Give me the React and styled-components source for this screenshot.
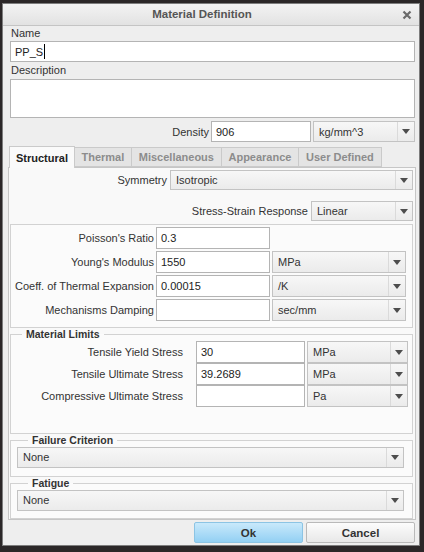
import React from "react";
import styled, { createGlobalStyle } from "styled-components";

const Global = createGlobalStyle`
  html, body { margin: 0; padding: 0; background: #2b2728; }
  body {
    width: 424px; height: 552px; overflow: hidden;
    font-family: "Liberation Sans", Arial, sans-serif; font-size: 11px; color: #333;
  }
  * { box-sizing: border-box; }
`;

const Window = styled.div`
  margin: 3px 0 0 2px;
  width: 418px;
  height: 543px;
  background: #eeeeee;
  border: 1px solid #7d7d7d;
  display: flex;
  flex-direction: column;
`;

const TitleBar = styled.div`
  height: 22px;
  flex: none;
  display: flex;
  align-items: center;
  justify-content: center;
  background: linear-gradient(#f3f3f3, #e2e2e2);
  border-bottom: 1px solid #c4c4c4;
  padding: 0 18px 1px 0;
  position: relative;
`;

const Title = styled.div`
  font-weight: bold;
  font-size: 11.5px;
  color: #555;
`;

const CloseBtn = styled.div`
  position: absolute;
  right: 7px;
  top: 6px;
  width: 10px;
  height: 10px;
  display: flex;
`;

const Body = styled.div`
  flex: 1;
  display: flex;
  flex-direction: column;
  padding: 0 4px 0 7px;
`;

const Label = styled.div`
  height: ${(p) => p.$h || 14}px;
  line-height: ${(p) => p.$h || 14}px;
  padding-left: 1px;
  color: #333;
  font-size: 11px;
`;

const TextBox = styled.div`
  height: ${(p) => p.$h || 21}px;
  width: ${(p) => (p.$w ? p.$w + "px" : "auto")};
  flex: none;
  background: #fff;
  border: 1px solid #b4b4b4;
  display: flex;
  align-items: center;
  padding: 0 4px;
  color: #222;
  font-size: 11px;
`;

const Caret = styled.span`
  display: inline-block;
  width: 1px;
  height: 15px;
  background: #000;
  margin-left: 1px;
`;

const Select = styled.div`
  height: ${(p) => p.$h || 21}px;
  width: ${(p) => (p.$w ? p.$w + "px" : "auto")};
  flex: none;
  background: linear-gradient(#f7f7f7, #ebebeb);
  border: 1px solid #c3c3c3;
  display: flex;
  align-items: stretch;
  color: #333;
  font-size: 11px;
`;

const SelectText = styled.div`
  flex: 1;
  display: flex;
  align-items: center;
  padding-left: 5px;
`;

const SelectArrow = styled.div`
  width: 17px;
  flex: none;
  border-left: 1px solid #dadada;
  display: flex;
  align-items: center;
  justify-content: center;
`;

const Row = styled.div`
  display: flex;
  align-items: center;
  justify-content: flex-end;
  gap: ${(p) => p.$gap ?? 3}px;
  margin-top: ${(p) => p.$mt || 0}px;
  padding-right: ${(p) => p.$pr || 0}px;
`;

const RowLabel = styled.div`
  font-size: 11px;
  color: #333;
  white-space: nowrap;
`;

const Tabs = styled.div`
  display: flex;
  height: 21px;
  margin-top: 4px;
  margin-left: -1px;
  align-items: flex-end;
`;

const Tab = styled.div`
  height: ${(p) => (p.$active ? 22 : 20)}px;
  padding: ${(p) => (p.$active ? "0 6px" : "0 7px 0 6.5px")};
  display: flex;
  align-items: center;
  font-weight: bold;
  font-size: 11px;
  color: ${(p) => (p.$active ? "#222" : "#8c8c8c")};
  background: ${(p) => (p.$active ? "#fafafa" : "#e4e4e4")};
  border: 1px solid #cacaca;
  border-bottom: ${(p) => (p.$active ? "none" : "1px solid #cacaca")};
  margin-left: ${(p) => (p.$active ? 0 : -1)}px;
  position: relative;
  z-index: ${(p) => (p.$active ? 1 : 0)};
  margin-bottom: ${(p) => (p.$active ? -1 : 0)}px;
`;

const Panel = styled.div`
  margin: 0 -1px 0 -2px;
  height: 353px;
  background: #f9f9f9;
  border: 1px solid #c6c6c6;
  display: flex;
  flex-direction: column;
  padding: 2px 2px 0 1px;
`;

const Group = styled.div`
  border: 1px solid #d2d2d2;
  background: #fbfbfb;
  margin-top: ${(p) => p.$mt || 0}px;
  padding: 2px 0 6px 0;
  display: flex;
  flex-direction: column;
`;

const Fieldset = styled.fieldset`
  margin: ${(p) => p.$mt || 0}px 0 0 0;
  border: 1px solid #d2d2d2;
  background: #fbfbfb;
  padding: 0 ${(p) => p.$pr ?? 8}px 0 ${(p) => p.$pl ?? 0}px;
  height: ${(p) => p.$h}px;
  min-width: 0;
  display: flex;
  flex-direction: column;
`;

const Legend = styled.legend`
  margin-left: 11px;
  padding: 0 4px;
  font-weight: bold;
  font-size: 10.5px;
  color: #333;
  line-height: 13px;
`;

const Grid = styled.div`
  display: grid;
  grid-template-columns: ${(p) => p.$cols};
  grid-auto-rows: 22px;
  column-gap: ${(p) => p.$cgap || 3}px;
  row-gap: ${(p) => p.$rgap || 0}px;
  align-items: stretch;
`;

const GridLabel = styled.div`
  display: flex;
  align-items: center;
  justify-content: flex-end;
  font-size: 11px;
  color: #333;
  white-space: nowrap;
  padding-right: ${(p) => p.$pr || 0}px;
`;

const Buttons = styled.div`
  display: flex;
  justify-content: flex-end;
  gap: 3px;
  margin-top: 2px;
`;

const Button = styled.div`
  width: 109px;
  height: 21px;
  border-radius: 2px;
  display: flex;
  align-items: center;
  justify-content: center;
  font-weight: bold;
  font-size: 11.5px;
  color: #333;
  border: 1px solid ${(p) => (p.$primary ? "#8cc4e4" : "#b9b9b9")};
  background: ${(p) =>
    p.$primary
      ? "linear-gradient(#c9e9fb, #93d0f3)"
      : "linear-gradient(#fcfcfc, #e8e8e8)"};
`;

const Arrow = () => (
  <svg width="8" height="5" viewBox="0 0 8 5">
    <path d="M0 0 L8 0 L4 5 Z" fill="#4d4d4d" />
  </svg>
);

const Dropdown = ({ value, w, h }) => (
  <Select $w={w} $h={h}>
    <SelectText>{value}</SelectText>
    <SelectArrow>
      <Arrow />
    </SelectArrow>
  </Select>
);

const properties = [
  { label: "Poisson's Ratio", value: "0.3" },
  { label: "Young's Modulus", value: "1550", unit: "MPa" },
  { label: "Coeff. of Thermal Expansion", value: "0.00015", unit: "/K" },
  { label: "Mechanisms Damping", value: "", unit: "sec/mm" },
];

const limits = [
  { label: "Tensile Yield Stress", value: "30", unit: "MPa" },
  { label: "Tensile Ultimate Stress", value: "39.2689", unit: "MPa" },
  { label: "Compressive Ultimate Stress", value: "", unit: "Pa" },
];

const tabs = ["Structural", "Thermal", "Miscellaneous", "Appearance", "User Defined"];

export default function App() {
  return (
    <>
      <Global />
      <Window>
        <TitleBar>
          <Title>Material Definition</Title>
          <CloseBtn>
            <svg width="10" height="10" viewBox="0 0 10 10">
              <path d="M1.5 1.5 L8.5 8.5 M8.5 1.5 L1.5 8.5" stroke="#6a6a6a" strokeWidth="2.2" />
            </svg>
          </CloseBtn>
        </TitleBar>
        <Body>
          <Label $h={15}>Name</Label>
          <TextBox>
            PP_S<Caret />
          </TextBox>
          <Label $h={17}>Description</Label>
          <TextBox $h={39} />
          <Row $mt={3} $gap={2}>
            <RowLabel>Density</RowLabel>
            <TextBox $w={100}>906</TextBox>
            <Dropdown value="kg/mm^3" w={102} />
          </Row>
          <Tabs>
            {tabs.map((t, i) => (
              <Tab key={t} $active={i === 0}>
                {t}
              </Tab>
            ))}
          </Tabs>
          <Panel>
            <Row $gap={3}>
              <RowLabel>Symmetry</RowLabel>
              <Dropdown value="Isotropic" w={243} h={20} />
            </Row>
            <Row $gap={3} $mt={11}>
              <RowLabel>Stress-Strain Response</RowLabel>
              <Dropdown value="Linear" w={102} h={20} />
            </Row>
            <Group $mt={3}>
              <Grid $cols="143px 114px 134px" $rgap={2} $cgap={2}>
                {properties.map((p) => (
                  <React.Fragment key={p.label}>
                    <GridLabel>{p.label}</GridLabel>
                    <TextBox $h={22}>{p.value}</TextBox>
                    {p.unit ? <Dropdown value={p.unit} h={22} /> : <span />}
                  </React.Fragment>
                ))}
              </Grid>
            </Group>
            <Fieldset $h={108} $mt={0}>
              <Legend>Material Limits</Legend>
              <Grid $cols="183px 109px 101px" $cgap={2}>
                {limits.map((p) => (
                  <React.Fragment key={p.label}>
                    <GridLabel $pr={11}>{p.label}</GridLabel>
                    <TextBox $h={22}>{p.value}</TextBox>
                    <Dropdown value={p.unit} h={22} />
                  </React.Fragment>
                ))}
              </Grid>
            </Fieldset>
            <Fieldset $h={44} $mt={0} $pl={6} $pr={8}>
              <Legend>Failure Criterion</Legend>
              <Dropdown value="None" h={21} />
            </Fieldset>
            <Fieldset $h={43} $mt={0} $pl={6} $pr={8}>
              <Legend>Fatigue</Legend>
              <Dropdown value="None" h={21} />
            </Fieldset>
          </Panel>
          <Buttons>
            <Button $primary>Ok</Button>
            <Button>Cancel</Button>
          </Buttons>
        </Body>
      </Window>
    </>
  );
}
